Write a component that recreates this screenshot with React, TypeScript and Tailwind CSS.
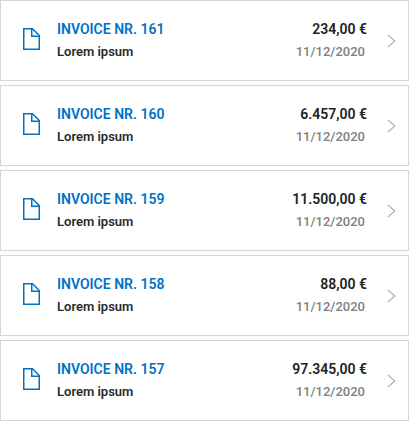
type Invoice = { number: number; description: string; amount: string; date: string };

const invoices: Invoice[] = [
  { number: 161, description: 'Lorem ipsum', amount: '234,00 €', date: '11/12/2020' },
  { number: 160, description: 'Lorem ipsum', amount: '6.457,00 €', date: '11/12/2020' },
  { number: 159, description: 'Lorem ipsum', amount: '11.500,00 €', date: '11/12/2020' },
  { number: 158, description: 'Lorem ipsum', amount: '88,00 €', date: '11/12/2020' },
  { number: 157, description: 'Lorem ipsum', amount: '97.345,00 €', date: '11/12/2020' },
];

function DocumentIcon() {
  return (
    <svg className="mb-1 shrink-0" width="18" height="22" viewBox="0 0 18 22" fill="none" stroke="#0072c6" strokeWidth="1.5" aria-hidden="true">
      <path d="M0.75 0.75H9.5L16.25 7.5V21.25H0.75Z" />
      <path d="M8.75 0.75V8.25H16.25" />
    </svg>
  );
}

function ChevronIcon() {
  return (
    <svg className="mt-px shrink-0" width="9" height="14" viewBox="0 0 9 14" fill="none" stroke="#a9a9a9" strokeWidth="1.1" aria-hidden="true">
      <path d="M0.8 0.8L7.8 7L0.8 13.2" />
    </svg>
  );
}

function InvoiceRow({ invoice }: { invoice: Invoice }) {
  return (
    <li>
      <button type="button" className="flex w-full items-center border border-[#d6d6d6] bg-white py-4 pr-3 pl-[22px] text-left">
        <DocumentIcon />
        <span className="ml-4 flex grow flex-col">
          <span className="text-sm leading-6 font-semibold text-[#0072c6]">INVOICE NR. {invoice.number}</span>
          <span className="pb-px text-[13px] leading-[22px] font-semibold text-[#2b2b2b]">{invoice.description}</span>
        </span>
        <span className="flex flex-col items-end">
          <span className="text-sm leading-6 font-semibold text-[#222222]">{invoice.amount}</span>
          <span className="pr-[2px] pb-px text-[13px] leading-[22px] font-medium text-[#808080]">{invoice.date}</span>
        </span>
        <span className="ml-5 flex">
          <ChevronIcon />
        </span>
      </button>
    </li>
  );
}

export default function App() {
  return (
    <ul className="flex flex-col gap-1 bg-[#fdfdfd] font-['Roboto','Noto_Sans',sans-serif]">
      {invoices.map((invoice) => (
        <InvoiceRow key={invoice.number} invoice={invoice} />
      ))}
    </ul>
  );
}
